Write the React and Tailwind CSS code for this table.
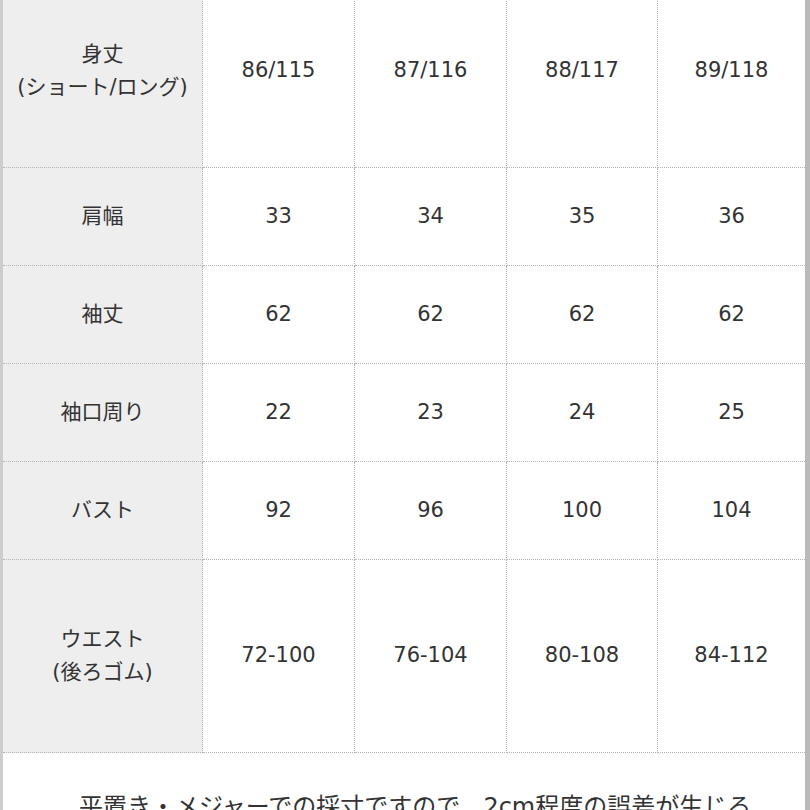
const rows = [
  { label: ["身丈", "(ショート/ロング)"], values: ["86/115", "87/116", "88/117", "89/118"], h: "h-[193px]" },
  { label: ["肩幅"], values: ["33", "34", "35", "36"], h: "h-[98px]" },
  { label: ["袖丈"], values: ["62", "62", "62", "62"], h: "h-[98px]" },
  { label: ["袖口周り"], values: ["22", "23", "24", "25"], h: "h-[98px]" },
  { label: ["バスト"], values: ["92", "96", "100", "104"], h: "h-[98px]" },
  { label: ["ウエスト", "(後ろゴム)"], values: ["72-100", "76-104", "80-108", "84-112"], h: "h-[193px]" },
];

export default function App() {
  return (
    <div className="h-[810px] w-[810px] overflow-hidden bg-white text-[#333] [font-family:'DejaVu_Sans','Noto_Sans_CJK_JP',sans-serif]">
      <div className="-mt-[25px] border-l-[3px] border-r-[5px] border-l-[#cdcdcd] border-r-[#bababa]">
        <div className="grid grid-cols-[200px_152px_152px_151px_1fr]">
          {rows.map((row) => (
            <div key={row.label[0]} className="contents">
              <div className={`${row.h} flex flex-col items-center justify-center border-b border-r border-dotted border-[#b4b4b4] bg-[#eeeeee] text-[21px] leading-[33px]`}>
                {row.label.map((l) => (
                  <span key={l}>{l}</span>
                ))}
              </div>
              {row.values.map((v, i) => (
                <div
                  key={i}
                  className={`${row.h} flex items-center justify-center border-b border-dotted border-[#b4b4b4] text-[21px] ${i < 3 ? "border-r" : ""}`}
                >
                  {v}
                </div>
              ))}
            </div>
          ))}
        </div>
        <div className="h-[300px] pl-[76px] pt-[36px]">
          <p className="w-[684px] text-[24px] leading-[36px]">
            平置き・メジャーでの採寸ですので、2cm程度の誤差が生じる場合がございます。
          </p>
        </div>
      </div>
    </div>
  );
}
